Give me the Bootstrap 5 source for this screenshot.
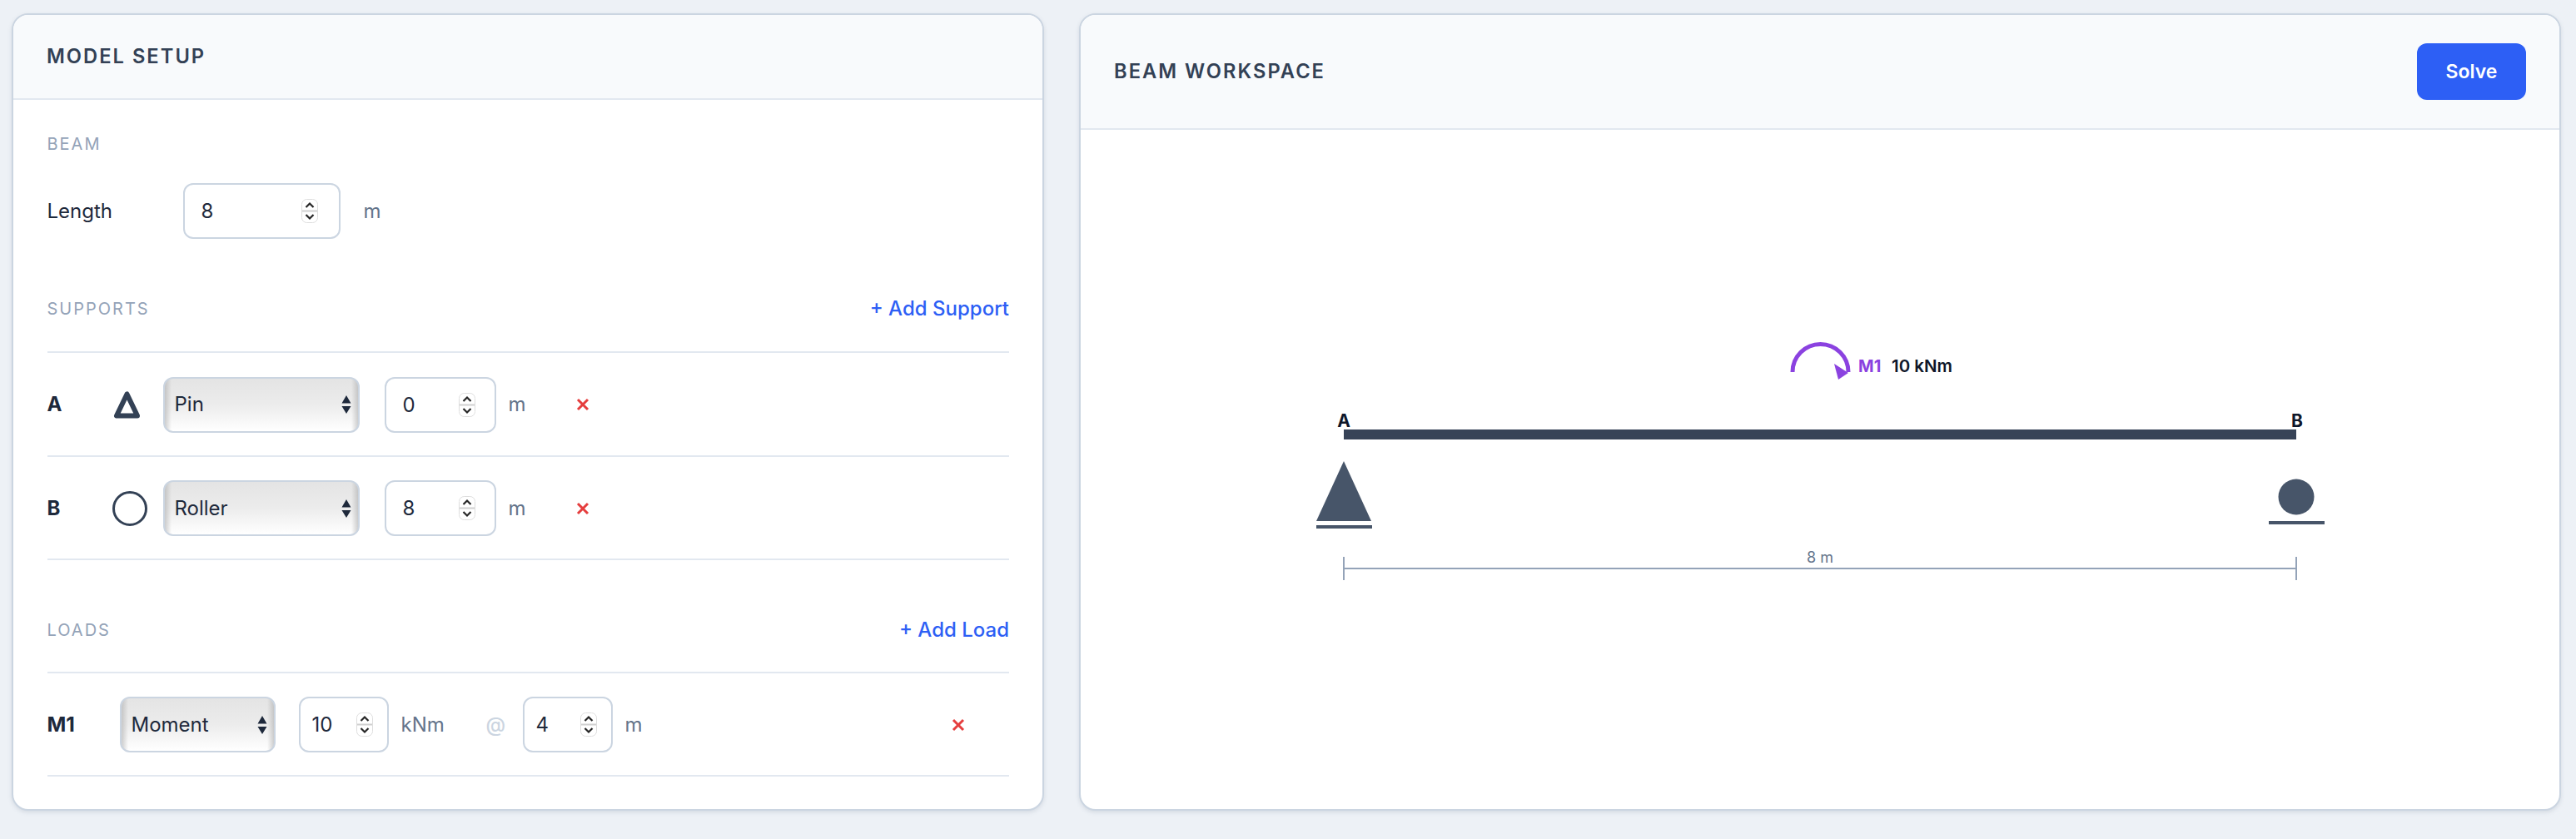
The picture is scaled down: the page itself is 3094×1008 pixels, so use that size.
<!DOCTYPE html>
<html lang="en">
<head>
<meta charset="utf-8">
<title>Beam</title>
<link href="https://cdn.jsdelivr.net/npm/bootstrap@5.3.0/dist/css/bootstrap.min.css" rel="stylesheet">
<style>
html,body{height:100%}
body{background:#edf1f6;font-family:Inter,"Liberation Sans",sans-serif;color:#1e293b;font-size:24px;overflow:hidden}
.page-wrap{height:1008px;padding:16px 18px 34px 14px;gap:42px}
.setup-card{width:1240px;flex:0 0 1240px}
.work-card{flex:1 1 0;min-width:0}
.panel{border:2px solid #cbd5e1;border-radius:20px;background:#fff;box-shadow:0 2px 5px rgba(100,116,139,.18);overflow:hidden}
.panel .card-header{background:#f8fafc;border-bottom:2px solid #e2e8f0;border-radius:0;padding:34px 40px;display:flex;align-items:center;justify-content:space-between}
.panel-title{font-size:23.7px;line-height:32px;font-weight:600;letter-spacing:.085em;color:#334155;text-transform:uppercase;margin:0}
.work-card .panel-title{line-height:68px}
.setup-body{padding:40px 40px 0 40.5px}
.sect-label{font-size:20px;line-height:26px;letter-spacing:.1em;color:#94a3b8;text-transform:uppercase;font-weight:400}
.sect-head{height:32px}
.sect-gap{margin-top:68px;margin-bottom:35px}
.sect-gap-b{margin-top:67.5px;margin-bottom:34px}
.add-link{font-size:24px;font-weight:500;line-height:32px;color:#2d5ff5;padding:0;border:0;text-decoration:none;background:none}
.solve-btn{background:#2d5ff5;border:0;border-radius:12px;color:#fff;width:131px;height:68px;font-size:23px;font-weight:600;padding:0}
.beam-row{margin-top:34px}
.len-label{width:163px}
.field{height:67px;border:2px solid #cbd5e1;border-radius:12px;font-size:24px;color:#1e293b;background-color:#fff;box-shadow:none;appearance:textfield;-moz-appearance:textfield;
background-repeat:no-repeat;background-size:20px 29px;
background-image:url("data:image/svg+xml,%3Csvg xmlns='http://www.w3.org/2000/svg' viewBox='0 0 20 29'%3E%3Crect x='.5' y='.5' width='19' height='28' rx='6' fill='%23fff' stroke='%23dedede'/%3E%3Cpath d='M1 14.5h18' stroke='%23d0d0d0' stroke-width='2'/%3E%3Cpath d='M5.5 10l4.5-4.5 4.5 4.5M5.5 19l4.5 4.5 4.5-4.5' fill='none' stroke='%23262626' stroke-width='2.2'/%3E%3C/svg%3E")}
.field::-webkit-inner-spin-button,.field::-webkit-outer-spin-button{-webkit-appearance:none;margin:0}
.field-lg{width:189px;padding:0 20px;background-position:right 25px center}
.field-md{width:134px;padding:0 20px;background-position:right 23px center}
.field-sm{width:108px;padding:0 14px;background-position:right 17px center}
.unit{color:#64748b;font-size:24px;line-height:32px}
.load-unit{width:102px}
.rows{border-top:2px solid #e2e8f0}
.item-row{border-bottom:2px solid #e2e8f0;height:124.5px;padding-top:1.5px}
.item-name{font-weight:700;color:#1e293b;font-size:24px}
.sup-name{width:78px}
.load-name{width:87px;font-weight:700;font-size:24.5px}
.sup-icon{width:42px;height:42px;display:block;margin-right:19px}
.native-sel{height:67px;border:2px solid #cbd5e1;border-radius:12px;font-size:24px;color:#1e293b;padding:0 36px 0 12px;box-shadow:none;appearance:none;-webkit-appearance:none;
background-color:#fff;background-repeat:no-repeat;
background-image:url("data:image/svg+xml,%3Csvg xmlns='http://www.w3.org/2000/svg' viewBox='0 0 12 22'%3E%3Cpath d='M6 0l5.5 9.5H.5zM6 22L.5 13h11z' fill='%231e293b'/%3E%3C/svg%3E"),linear-gradient(90deg,rgba(170,170,170,.55),rgba(170,170,170,0) 8px,rgba(170,170,170,0) calc(100% - 8px),rgba(170,170,170,.55)),linear-gradient(180deg,#e4e4e4 0,#ececec 50%,#fff 100%);
background-position:right 8px center,0 0,0 0;background-size:12px 22px,100% 100%,100% 100%}
.sel-md{width:236px;margin-right:30px}
.sel-sm{width:187px;margin-right:28px}
.gap-unit{margin-left:15px}
.at-sign{color:#cbd5e1;font-weight:500;width:44px;margin-left:0}
.del-btn{border:0;background:none;padding:0;width:16px;height:16px;display:block;line-height:0}
.del-sup{margin-left:60px}
.del-load{margin-left:auto;margin-right:53px}
.canvas-wrap{padding:0;flex:1 1 auto;min-height:0}
.diagram{display:block;width:1776px;height:816px}
.dia-node{font-family:Inter,"Liberation Sans",sans-serif;font-size:21px;font-weight:700;fill:#0f172a;text-anchor:middle}
.dia-dim{font-family:Inter,"Liberation Sans",sans-serif;font-size:18px;fill:#64748b;text-anchor:middle}
.dia-m{font-family:Inter,"Liberation Sans",sans-serif;font-size:20px;font-weight:700;fill:#8b42e0}
.dia-v{font-family:Inter,"Liberation Sans",sans-serif;font-size:20.5px;font-weight:600;fill:#0f172a}
</style>
</head>
<body>
<div class="page-wrap d-flex align-items-stretch">
  <div class="card panel setup-card">
    <div class="card-header"><h2 class="panel-title">Model Setup</h2></div>
    <div class="setup-body">
      <div class="sect-label">Beam</div>
      <div class="d-flex align-items-center beam-row">
        <label class="len-label" for="len">Length</label>
        <input id="len" class="form-control field field-lg" type="number" value="8">
        <span class="unit ms-4 ps-1">m</span>
      </div>

      <div class="d-flex justify-content-between align-items-center sect-head sect-gap">
        <span class="sect-label">Supports</span>
        <button class="btn add-link" type="button">+ Add Support</button>
      </div>
      <div class="rows">
        <div class="d-flex align-items-center item-row">
          <span class="item-name sup-name">A</span>
          <svg class="sup-icon" viewBox="0 0 42 42"><polygon points="17.5,8.5 5,34.5 30,34.5" fill="none" stroke="#334155" stroke-width="6" stroke-linejoin="round"/></svg>
          <select class="form-select native-sel sel-md"><option>Pin</option><option>Roller</option></select>
          <input class="form-control field field-md" type="number" value="0">
          <span class="unit gap-unit">m</span>
          <button class="del-btn del-sup" type="button" aria-label="Remove"><svg width="16" height="16" viewBox="0 0 16 16"><path d="M2 2l12 12M14 2L2 14" stroke="#e53e3e" stroke-width="3"/></svg></button>
        </div>
        <div class="d-flex align-items-center item-row">
          <span class="item-name sup-name">B</span>
          <svg class="sup-icon" viewBox="0 0 42 42"><circle cx="21" cy="21" r="19.5" fill="none" stroke="#334155" stroke-width="3"/></svg>
          <select class="form-select native-sel sel-md"><option>Roller</option><option>Pin</option></select>
          <input class="form-control field field-md" type="number" value="8">
          <span class="unit gap-unit">m</span>
          <button class="del-btn del-sup" type="button" aria-label="Remove"><svg width="16" height="16" viewBox="0 0 16 16"><path d="M2 2l12 12M14 2L2 14" stroke="#e53e3e" stroke-width="3"/></svg></button>
        </div>
      </div>

      <div class="d-flex justify-content-between align-items-center sect-head sect-gap-b">
        <span class="sect-label">Loads</span>
        <button class="btn add-link" type="button">+ Add Load</button>
      </div>
      <div class="rows">
        <div class="d-flex align-items-center item-row">
          <span class="item-name load-name">M1</span>
          <select class="form-select native-sel sel-sm"><option>Moment</option><option>Point</option></select>
          <input class="form-control field field-sm" type="number" value="10">
          <span class="unit gap-unit load-unit">kNm</span>
          <span class="at-sign">@</span>
          <input class="form-control field field-sm" type="number" value="4">
          <span class="unit gap-unit">m</span>
          <button class="del-btn del-load" type="button" aria-label="Remove"><svg width="16" height="16" viewBox="0 0 16 16"><path d="M2 2l12 12M14 2L2 14" stroke="#e53e3e" stroke-width="3"/></svg></button>
        </div>
      </div>
    </div>
  </div>

  <div class="card panel work-card">
    <div class="card-header">
      <h2 class="panel-title">Beam Workspace</h2>
      <button class="btn solve-btn" type="button">Solve</button>
    </div>
    <div class="canvas-wrap">
      <svg class="diagram" viewBox="1298 156 1776 816">
        <rect x="1614" y="516" width="1144" height="12" fill="#374357"/>
        <text class="dia-node" x="1614" y="513">A</text>
        <text class="dia-node" x="2759" y="513">B</text>
        <polygon points="1614,554 1581,626 1647,626" fill="#475569"/>
        <rect x="1581" y="631" width="67" height="4" fill="#475569"/>
        <circle cx="2758" cy="597" r="21.5" fill="#475569"/>
        <rect x="2725" y="626" width="67" height="4" fill="#475569"/>
        <path d="M1614 683H2758M1614 669V697M2758 669V697" stroke="#94a3b8" stroke-width="2" fill="none"/>
        <text class="dia-dim" x="2186" y="676">8 m</text>
        <path d="M2153 447A33.5 33.5 0 0 1 2220 447" fill="none" stroke="#8b42e0" stroke-width="5"/>
        <polygon points="2203,437 2220,448 2208,456" fill="#8b42e0"/>
        <text class="dia-m" x="2232" y="447">M1</text>
        <text class="dia-v" x="2272" y="447">10 kNm</text>
      </svg>
    </div>
  </div>
</div>
<script src="https://cdn.jsdelivr.net/npm/bootstrap@5.3.0/dist/js/bootstrap.bundle.min.js"></script>
</body>
</html>
